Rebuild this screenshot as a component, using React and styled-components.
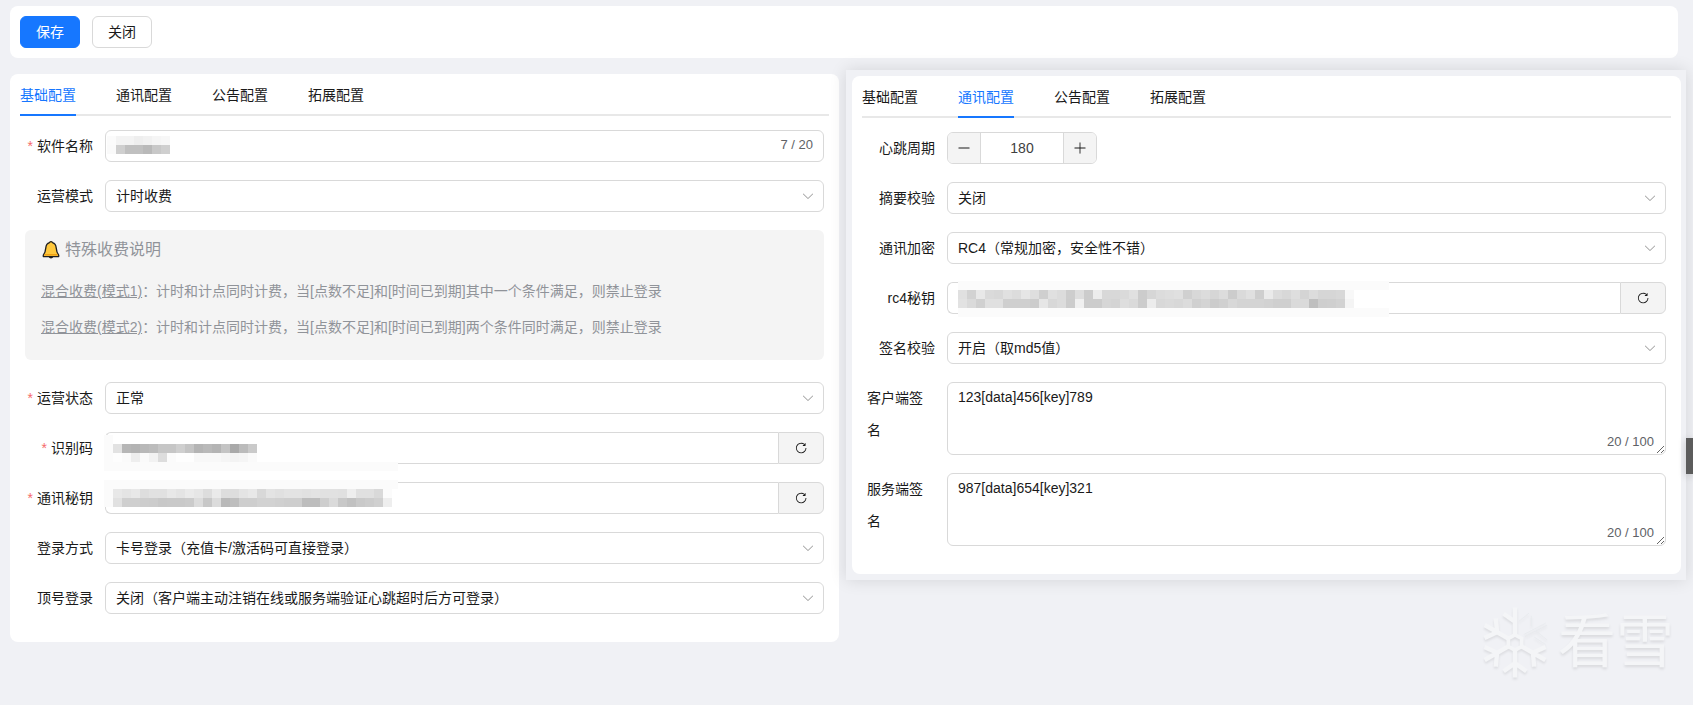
import React, { useId, useState } from "react";
import styled, { createGlobalStyle, css } from "styled-components";

const GlobalStyle = createGlobalStyle`
  :root {
    --primary: #1677ff;
    --text: #1a1a1a;
    --textRegular: #606266;
    --textMuted: #909399;
    --border: #d9d9d9;
    --fill: #f4f4f4;
    --page: #f0f1f5;
  }
  * {
    box-sizing: border-box;
  }
  body {
    margin: 0;
    background: var(--page);
    color: var(--text);
    font-family: "Liberation Sans", "Noto Sans CJK SC", sans-serif;
    font-size: 14px;
  }
  button,
  input,
  select,
  textarea {
    font: inherit;
    color: inherit;
  }
`;

const Page = styled.div`
  min-height: 100vh;
  padding: 6px 7px 0 10px;
`;

const Toolbar = styled.div`
  display: flex;
  gap: 12px;
  margin-right: 8px;
  padding: 10px;
  border-radius: 8px;
  background: #fff;
`;

const Button = styled.button`
  width: 60px;
  height: 32px;
  padding: 0;
  border: 1px solid var(--border);
  border-radius: 6px;
  background: #fff;
  line-height: 30px;
  cursor: pointer;
  ${({ $primary }) =>
    $primary &&
    css`
      border-color: var(--primary);
      background: var(--primary);
      color: #fff;
    `}
`;

const Columns = styled.main`
  display: grid;
  grid-template-columns: 829fr 840fr;
  align-items: start;
  gap: 7px;
  margin-top: 12px;
`;

const MainColumn = styled.div`
  padding-top: 4px;
`;

const SideColumn = styled.div`
  display: flex;
  flex-direction: column;
`;

const Floating = styled.div`
  position: relative;
  padding: 6px 5px 6px 6px;
  background: var(--page);
  box-shadow: 0 0 16px rgba(0, 0, 0, 0.12);
`;

const Card = styled.section`
  padding: 0 10px 10px;
  border-radius: 8px;
  background: #fff;
`;

const TabList = styled.div`
  display: flex;
  gap: 40px;
  border-bottom: 2px solid #e8e8e8;
`;

const Tab = styled.button`
  height: 42px;
  margin-bottom: -2px;
  padding: 2px 0 0;
  border: 0;
  border-bottom: 2px solid transparent;
  background: none;
  line-height: 38px;
  cursor: pointer;
  ${({ $active }) =>
    $active &&
    css`
      border-color: var(--primary);
      color: var(--primary);
    `}
`;

const Form = styled.form`
  padding: 14px 5px 0;
`;

const Item = styled.div`
  display: flex;
  margin-bottom: 18px;
`;

const Label = styled.label`
  flex: none;
  display: flex;
  justify-content: flex-end;
  width: 80px;
  padding-right: 12px;
  line-height: 32px;
  ${({ $required }) =>
    $required &&
    css`
      &::before {
        content: "*";
        margin-right: 4px;
        color: #f56c6c;
      }
    `}
`;

const Control = styled.div`
  position: relative;
  flex: 1;
  display: flex;
  min-width: 0;
`;

const field = css`
  border: 1px solid var(--border);
  border-radius: 6px;
  outline: 0;
  background: #fff;
  &:focus {
    border-color: var(--primary);
  }
`;

const Input = styled.input`
  ${field}
  flex: 1;
  min-width: 0;
  height: 32px;
  padding: 0 10px;
  ${({ $joined }) =>
    $joined &&
    css`
      border-right: 0;
      border-radius: 6px 0 0 6px;
    `}
`;

const SelectBox = styled.select`
  ${field}
  appearance: none;
  width: 100%;
  height: 32px;
  padding: 0 30px 0 10px;
  line-height: 30px;
`;

const Textarea = styled.textarea`
  ${field}
  display: block;
  width: 100%;
  height: 73px;
  padding: 4px 10px;
  line-height: 21px;
  resize: vertical;
`;

const Count = styled.span`
  position: absolute;
  right: ${({ $right }) => $right}px;
  bottom: ${({ $bottom }) => $bottom}px;
  color: var(--textRegular);
  font-size: 13px;
  line-height: 14px;
`;

const Append = styled.button`
  display: flex;
  align-items: center;
  justify-content: center;
  width: 46px;
  height: 32px;
  padding: 0;
  border: 1px solid var(--border);
  border-radius: 0 6px 6px 0;
  background: var(--fill);
  cursor: pointer;
`;

const Stepper = styled.div`
  display: flex;
  width: 150px;
  height: 32px;
  border: 1px solid var(--border);
  border-radius: 6px;
  overflow: hidden;
`;

const StepButton = styled.button`
  display: flex;
  align-items: center;
  justify-content: center;
  width: 32px;
  padding: 0;
  border: 0;
  background: var(--fill);
  cursor: pointer;
`;

const StepInput = styled.input`
  flex: 1;
  min-width: 0;
  padding: 0;
  border: 0;
  border-left: 1px solid var(--border);
  border-right: 1px solid var(--border);
  outline: 0;
  color: #404040;
  text-align: center;
`;

const Icon = styled.svg`
  width: 14px;
  height: 14px;
  fill: currentColor;
`;

const Arrow = styled(Icon)`
  position: absolute;
  top: 9px;
  right: 9px;
  color: #999;
  pointer-events: none;
`;

const Notice = styled.aside`
  margin-bottom: 22px;
  padding: 8px 16px 9px;
  border-radius: 6px;
  background: var(--fill);
  color: var(--textMuted);
`;

const NoticeTitle = styled.h4`
  display: flex;
  align-items: center;
  gap: 4px;
  margin: 0 0 17px;
  font-size: 16px;
  font-weight: 400;
  line-height: 24px;
  svg {
    width: 20px;
    height: 20px;
  }
`;

const NoticeText = styled.p`
  margin: 0 0 12px;
  line-height: 24px;
`;

const MosaicSvg = styled.svg`
  position: absolute;
  z-index: 1;
  top: ${({ $top }) => $top}px;
  left: ${({ $left }) => $left}px;
  pointer-events: none;
`;

const Handle = styled.button`
  position: fixed;
  top: 438px;
  right: 0;
  width: 7px;
  height: 36px;
  padding: 0;
  border: 0;
  background: #5c5c5c;
  box-shadow: 0 2px 8px rgba(0, 0, 0, 0.2);
`;

const Watermark = styled.div`
  display: flex;
  align-self: flex-end;
  align-items: center;
  gap: 8px;
  margin: 22px 12px 0 0;
  color: #f4f5f7;
  font-size: 58px;
  line-height: 80px;
  text-shadow: 0 2px 3px rgba(0, 0, 0, 0.1);
  svg {
    width: 70px;
    height: 77px;
    filter: drop-shadow(0 2px 1px rgba(0, 0, 0, 0.08));
  }
`;

const paths = {
  down: "M831.872 340.864 512 652.672 192.128 340.864a30.592 30.592 0 0 0-42.752 0 29.12 29.12 0 0 0 0 41.6L489.664 714.24a32 32 0 0 0 44.672 0l340.288-331.712a29.12 29.12 0 0 0 0-41.728 30.592 30.592 0 0 0-42.752 0z",
  refresh:
    "M784.512 230.272v-50.56a32 32 0 1 1 64 0v149.056a32 32 0 0 1-32 32H667.52a32 32 0 1 1 0-64h92.992A320 320 0 1 0 524.8 833.152a320 320 0 0 0 320-320h64a384 384 0 0 1-384 384 384 384 0 0 1-384-384 384 384 0 0 1 643.712-282.88z",
  minus: "M128 544h768a32 32 0 1 0 0-64H128a32 32 0 0 0 0 64z",
  plus: "M480 480V128a32 32 0 0 1 64 0v352h352a32 32 0 1 1 0 64H544v352a32 32 0 1 1-64 0V544H128a32 32 0 0 1 0-64h352z",
};

// grey levels of the masked values, one row of cells per string
const CELL = 9;

const blank = (tone, count) => Array(count).fill(tone).join(" ");

const nameMask = ["fb f3 f3 ee f1 f5 f7", "fa cf c0 c0 b9 c8 cf"];

const codeMask = [
  "fb",
  "fb e2 b6 b3 b8 bc c6 c6 cf c4 b4 b9 b4 c4 a9 bb ca",
  "fb fd fa ee fa f2 dd fb fe fe f8 f8 f8 f5 f3 f5 fa",
  blank("fb", 33),
  blank("ff", 33),
  blank("fb", 33),
  "fb e8 e4 e8 dd e1 e1 e8 e4 ea e6 dd ea dd dd e4 e8 d8 e3 e0 e3 e3 e1 e3 e1 e1 e0 ee e0 e0 d9 fb ff",
  "fb e1 cf cf cd cc c8 c9 c9 cb dc c8 dc b9 be ce ce d2 d2 d0 ce ce bd bd ce da c8 c1 c9 cc d0 ee ff",
];

const rc4Mask = [
  blank("fb", 48),
  "e0 d2 e8 da d8 e0 dc e6 de cf e0 dc cd de cc ec d8 d8 da e0 cc d6 dc de e0 d0 d8 dc d6 dc cc da e0 ce ea dc d8 de d4 dc d6 d6 d8 f8",
  "e2 da d0 e0 e0 cf cf cf cc e6 d8 dc cc f0 cc cc d6 d4 de da cc ec d8 da d8 dc d0 d4 cc d0 d8 d4 d4 d4 d2 cf cf da da bf ce cf d2 f4",
  blank("fb", 48),
];

function Mosaic({ rows, width, top, left }) {
  return (
    <MosaicSvg
      $top={top}
      $left={left}
      width={width}
      height={rows.length * CELL}
      shapeRendering="crispEdges"
      aria-hidden="true"
    >
      {rows.map((row, y) =>
        row
          .split(" ")
          .map((tone, x) => (
            <rect
              key={`${x}-${y}`}
              x={x * CELL}
              y={y * CELL}
              width={CELL}
              height={CELL}
              fill={`#${tone}${tone}${tone}`}
            />
          ))
      )}
    </MosaicSvg>
  );
}

function Glyph({ name, as: Component = Icon }) {
  return (
    <Component viewBox="0 0 1024 1024" aria-hidden="true">
      <path d={paths[name]} />
    </Component>
  );
}

function Bell() {
  return (
    <svg viewBox="0 0 20 20" aria-hidden="true">
      <path
        d="M8.3 16.5a1.8 1.8 0 0 0 3.4 0z"
        fill="#d67d00"
        stroke="#1f1f1f"
        strokeWidth="1.4"
      />
      <path
        d="M10 1.6c.9 0 1.4.5 1.5 1.1 2.3.7 3.5 2.6 3.7 5.2.2 3.2.6 4.8 2.5 7.2v1.5H2.3v-1.5c1.9-2.4 2.3-4 2.5-7.2.2-2.6 1.4-4.5 3.7-5.2.1-.6.6-1.1 1.5-1.1z"
        fill="#ffc83d"
        stroke="#1f1f1f"
        strokeWidth="1.3"
        strokeLinejoin="round"
      />
      <path d="M3.3 14.8h13.4" stroke="#e8960c" strokeWidth="1.2" />
    </svg>
  );
}

function Snowflake() {
  return (
    <svg viewBox="-105 -115 210 230" fill="none" aria-hidden="true">
      <g stroke="#f4f5f7" strokeWidth="13">
        <path d="M0-23 20-12V12L0 23-20 12V-12z" strokeWidth="11" />
        {[120, 180, 240, 300].map((angle) => (
          <path
            key={angle}
            d="M0-23V-105M-34-86 0-62 34-86"
            transform={`rotate(${angle})`}
          />
        ))}
        <path d="M0-23V-105M-34-86 0-62" />
      </g>
      <g stroke="#e6e8eb" strokeWidth="2">
        <path d="M12-64 42-88M49-80V-48M26-24 92-58M30-18 96-52M64-34 96-8M58-16 92 6" />
      </g>
    </svg>
  );
}

const tabs = ["基础配置", "通讯配置", "公告配置", "拓展配置"];

function Tabs({ initial }) {
  const [active, setActive] = useState(initial);
  return (
    <TabList role="tablist">
      {tabs.map((tab) => (
        <Tab
          key={tab}
          type="button"
          role="tab"
          aria-selected={tab === active}
          $active={tab === active}
          onClick={() => setActive(tab)}
        >
          {tab}
        </Tab>
      ))}
    </TabList>
  );
}

function FormItem({ label, required, children }) {
  const id = useId();
  return (
    <Item>
      <Label htmlFor={id} $required={required}>
        {label}
      </Label>
      <Control>{children(id)}</Control>
    </Item>
  );
}

function SelectItem({ label, required, value }) {
  return (
    <FormItem label={label} required={required}>
      {(id) => (
        <>
          <SelectBox id={id} defaultValue={value}>
            <option>{value}</option>
          </SelectBox>
          <Glyph name="down" as={Arrow} />
        </>
      )}
    </FormItem>
  );
}

function KeyItem({ label, required, mask }) {
  return (
    <FormItem label={label} required={required}>
      {(id) => (
        <>
          <Input id={id} $joined />
          <Append type="button" aria-label="刷新">
            <Glyph name="refresh" />
          </Append>
          {mask}
        </>
      )}
    </FormItem>
  );
}

function TextareaItem({ label, value }) {
  const [text, setText] = useState(value);
  return (
    <FormItem label={label}>
      {(id) => (
        <>
          <Textarea
            id={id}
            maxLength={100}
            value={text}
            onChange={(e) => setText(e.target.value)}
          />
          <Count $right={12} $bottom={6}>
            {text.length} / 100
          </Count>
        </>
      )}
    </FormItem>
  );
}

function StepperItem({ label }) {
  const [value, setValue] = useState(180);
  return (
    <FormItem label={label}>
      {(id) => (
        <Stepper>
          <StepButton
            type="button"
            aria-label="减少"
            onClick={() => setValue(value - 1)}
          >
            <Glyph name="minus" />
          </StepButton>
          <StepInput
            id={id}
            value={value}
            onChange={(e) => setValue(Number(e.target.value) || 0)}
          />
          <StepButton
            type="button"
            aria-label="增加"
            onClick={() => setValue(value + 1)}
          >
            <Glyph name="plus" />
          </StepButton>
        </Stepper>
      )}
    </FormItem>
  );
}

function BasicPanel() {
  return (
    <Card>
      <Tabs initial="基础配置" />
      <Form>
        <FormItem label="软件名称" required>
          {(id) => (
            <>
              <Input id={id} maxLength={20} />
              <Mosaic rows={nameMask} width={63} top={6} left={2} />
              <Count $right={11} $bottom={10}>
                7 / 20
              </Count>
            </>
          )}
        </FormItem>
        <SelectItem label="运营模式" value="计时收费" />
        <Notice>
          <NoticeTitle>
            <Bell />
            特殊收费说明
          </NoticeTitle>
          <NoticeText>
            <u>混合收费(模式1)</u>
            ：计时和计点同时计费，当[点数不足]和[时间已到期]其中一个条件满足，则禁止登录
          </NoticeText>
          <NoticeText>
            <u>混合收费(模式2)</u>
            ：计时和计点同时计费，当[点数不足]和[时间已到期]两个条件同时满足，则禁止登录
          </NoticeText>
        </Notice>
        <SelectItem label="运营状态" required value="正常" />
        <KeyItem
          label="识别码"
          required
          mask={<Mosaic rows={codeMask} width={294} top={3} left={-1} />}
        />
        <KeyItem label="通讯秘钥" required />
        <SelectItem
          label="登录方式"
          value="卡号登录（充值卡/激活码可直接登录）"
        />
        <SelectItem
          label="顶号登录"
          value="关闭（客户端主动注销在线或服务端验证心跳超时后方可登录）"
        />
      </Form>
    </Card>
  );
}

function NetworkPanel() {
  return (
    <Card>
      <Tabs initial="通讯配置" />
      <Form>
        <StepperItem label="心跳周期" />
        <SelectItem label="摘要校验" value="关闭" />
        <SelectItem label="通讯加密" value="RC4（常规加密，安全性不错）" />
        <KeyItem
          label="rc4秘钥"
          mask={<Mosaic rows={rc4Mask} width={431} top={-1} left={11} />}
        />
        <SelectItem label="签名校验" value="开启（取md5值）" />
        <TextareaItem label="客户端签名" value="123[data]456[key]789" />
        <TextareaItem label="服务端签名" value="987[data]654[key]321" />
      </Form>
    </Card>
  );
}

function App() {
  return (
    <>
      <GlobalStyle />
      <Page>
        <Toolbar>
          <Button type="button" $primary>
            保存
          </Button>
          <Button type="button">关闭</Button>
        </Toolbar>
        <Columns>
          <MainColumn>
            <BasicPanel />
          </MainColumn>
          <SideColumn>
            <Floating>
              <NetworkPanel />
            </Floating>
            <Watermark>
              <Snowflake />
              <span>看雪</span>
            </Watermark>
          </SideColumn>
        </Columns>
        <Handle type="button" aria-label="展开" />
      </Page>
    </>
  );
}

export default App;
